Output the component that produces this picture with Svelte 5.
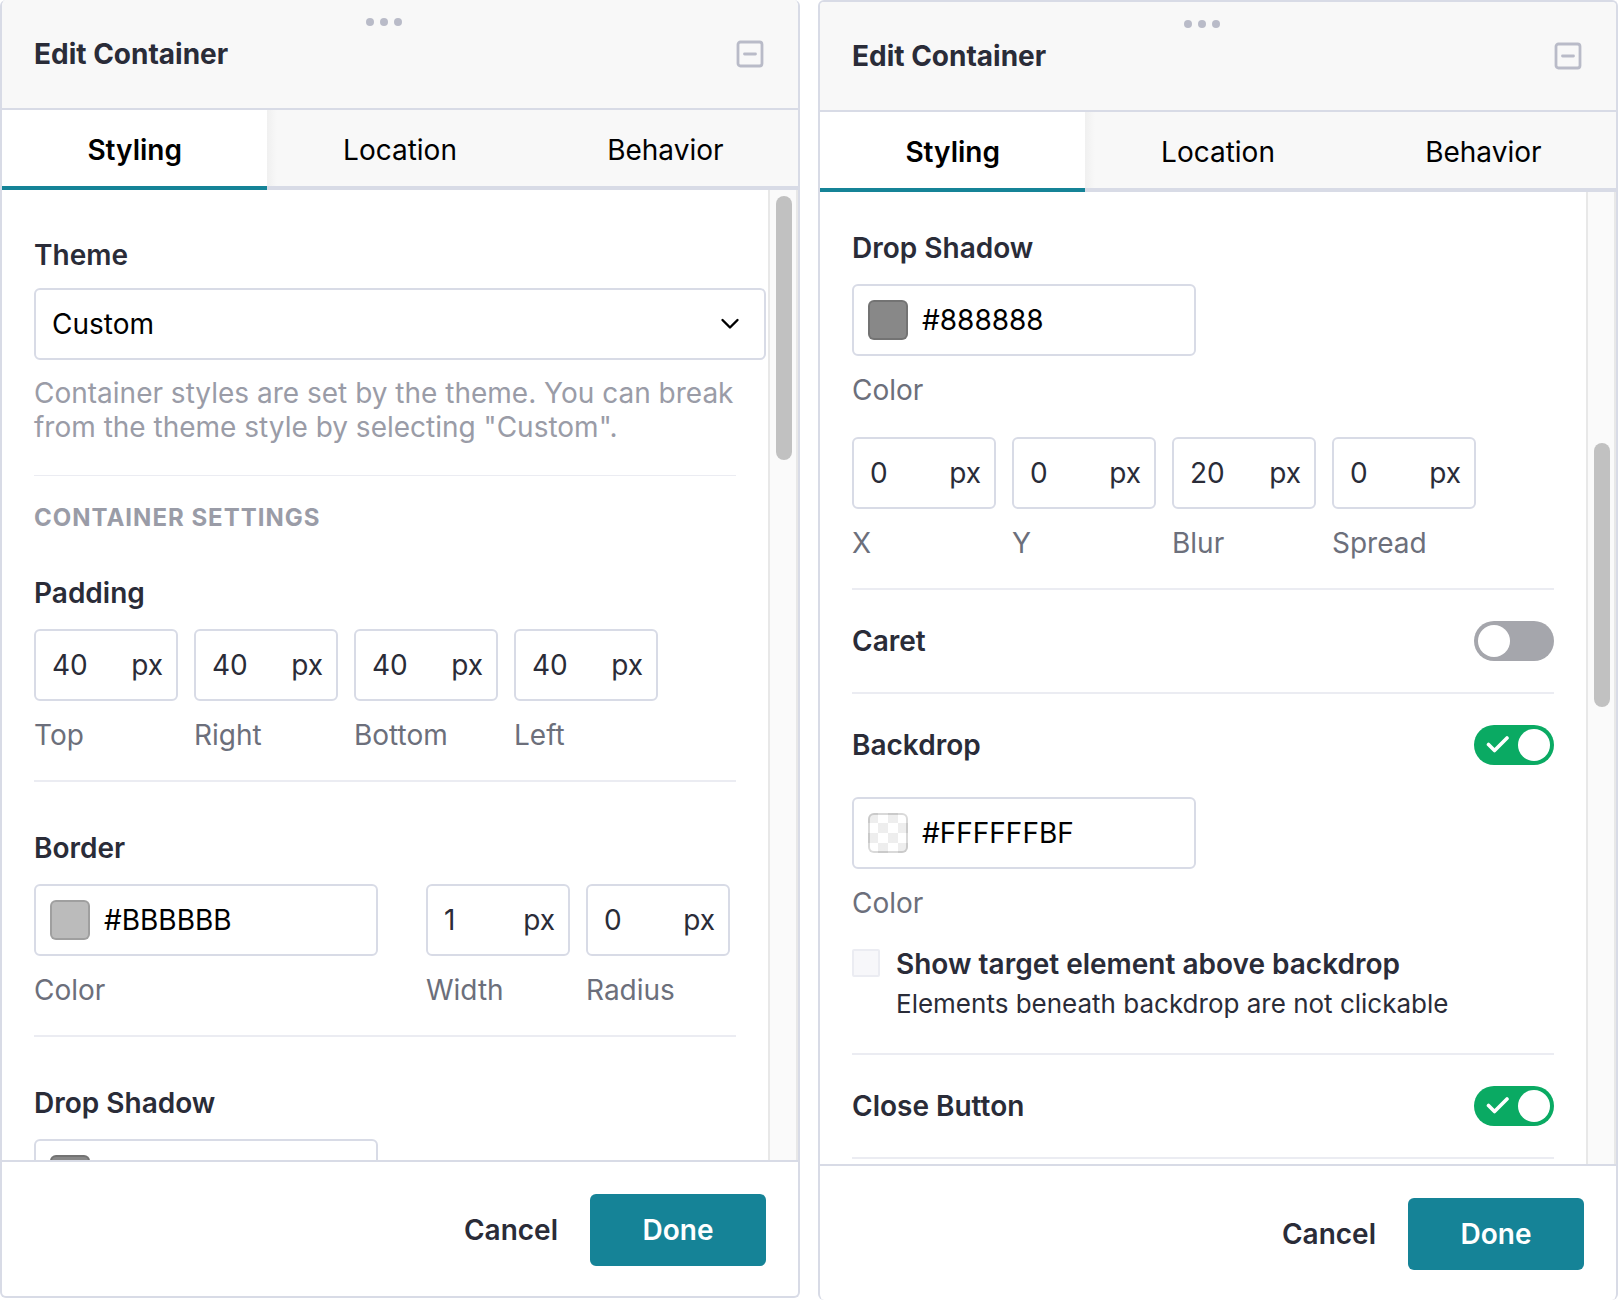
<script>
    const tabs = ['Styling', 'Location', 'Behavior'];

    // thumb: distance of the scrollbar thumb from the top of its track
    const panels = [
        { id: 'top', thumb: 6 },
        { id: 'scrolled', thumb: 251 },
    ];

    const padding = [
        { label: 'Top', value: 40 },
        { label: 'Right', value: 40 },
        { label: 'Bottom', value: 40 },
        { label: 'Left', value: 40 },
    ];
    const border = [
        { label: 'Width', value: 1 },
        { label: 'Radius', value: 0 },
    ];
    const shadow = [
        { label: 'X', value: 0 },
        { label: 'Y', value: 0 },
        { label: 'Blur', value: 20 },
        { label: 'Spread', value: 0 },
    ];
</script>

{#snippet pxField(id, field)}
    <div class="field">
        <div class="box px-box">
            <input id="{id}-{field.label}" type="text" inputmode="numeric" value={field.value} />
            <span>px</span>
        </div>
        <label for="{id}-{field.label}">{field.label}</label>
    </div>
{/snippet}

{#snippet colorField(id, color)}
    <div class="field">
        <div class="box color-box">
            <button class="swatch" aria-label="Pick color" style="--color: {color}"></button>
            <input id="{id}-color" type="text" value={color} />
        </div>
        <label for="{id}-color">Color</label>
    </div>
{/snippet}

{#snippet toggleRow(id, label, on)}
    <div class="toggle-row">
        <label class="group-label" for={id}>{label}</label>
        <span class="switch">
            <input {id} type="checkbox" role="switch" checked={on} />
            {#if on}
                <svg width="24" height="20" viewBox="0 0 24 20">
                    <path d="M2.5 10.5 L8.5 16.5 L21 4" />
                </svg>
            {/if}
        </span>
    </div>
{/snippet}

<main>
    {#each panels as panel}
        <section class="panel {panel.id}">
            <header>
                <div class="handle"><i></i><i></i><i></i></div>
                <h2>Edit Container</h2>
                <button class="collapse" aria-label="Collapse">
                    <svg width="28" height="28" viewBox="0 0 28 28">
                        <rect x="2" y="2" width="24" height="24" rx="2.5" />
                        <path d="M8.5 14 H19.5" />
                    </svg>
                </button>
            </header>

            <nav>
                {#each tabs as tab, i}
                    <button class="tab" class:active={i === 0}>{tab}</button>
                {/each}
            </nav>

            <div class="body">
                <div class="content">
                    {#if panel.id === 'top'}
                        <div class="theme">
                            <label class="group-label" for="theme">Theme</label>
                            <div class="select">
                                <select id="theme" class="box">
                                    <option>Custom</option>
                                </select>
                                <svg width="20" height="14" viewBox="0 0 20 14">
                                    <path d="M2.5 3 L10 10.5 L17.5 3" />
                                </svg>
                            </div>
                            <p>Container styles are set by the theme. You can break from the theme style by selecting "Custom".</p>
                        </div>

                        <h3>Container Settings</h3>

                        <div class="group first">
                            <div class="group-label">Padding</div>
                            <div class="row">
                                {#each padding as field}
                                    {@render pxField('padding', field)}
                                {/each}
                            </div>
                        </div>

                        <div class="group">
                            <div class="group-label">Border</div>
                            <div class="row">
                                <div class="border-color">
                                    {@render colorField('border', '#BBBBBB')}
                                </div>
                                {#each border as field}
                                    {@render pxField('border', field)}
                                {/each}
                            </div>
                        </div>

                        <div class="group">
                            <div class="group-label">Drop Shadow</div>
                            {@render colorField('shadow', '#888888')}
                        </div>
                    {:else}
                        <div class="group">
                            <div class="group-label">Drop Shadow</div>
                            {@render colorField('drop-shadow', '#888888')}
                            <div class="row offsets">
                                {#each shadow as field}
                                    {@render pxField('drop-shadow', field)}
                                {/each}
                            </div>
                        </div>

                        <div class="toggle-group">
                            {@render toggleRow('caret', 'Caret', false)}
                        </div>

                        <div class="toggle-group open">
                            {@render toggleRow('backdrop', 'Backdrop', true)}
                            <div class="backdrop">
                                {@render colorField('backdrop', '#FFFFFFBF')}
                                <label class="check">
                                    <input type="checkbox" />
                                    <span>
                                        <b>Show target element above backdrop</b>
                                        <small>Elements beneath backdrop are not clickable</small>
                                    </span>
                                </label>
                            </div>
                        </div>

                        <div class="toggle-group">
                            {@render toggleRow('close', 'Close Button', true)}
                        </div>
                    {/if}
                </div>
                <div class="track">
                    <div class="thumb" style="margin-top: {panel.thumb}px"></div>
                </div>
            </div>

            <footer>
                <button class="cancel">Cancel</button>
                <button class="done">Done</button>
            </footer>
        </section>
    {/each}
</main>

<style>
    :global(body) {
        background: #fff;
    }
    main {
        display: flex;
        gap: 18px;
        height: 100vh;
        overflow: hidden;
        font-family: Inter, "Liberation Sans", sans-serif;
        font-size: 28px;
        line-height: 34px;
        color: #2a2c38;
    }
    main * {
        box-sizing: border-box;
    }
    button, input, select {
        font: inherit;
        color: inherit;
        margin: 0;
        padding: 0;
        border: 0;
        background: none;
    }
    button, select {
        cursor: pointer;
    }
    svg {
        display: block;
        fill: none;
        stroke-linecap: round;
        stroke-linejoin: round;
    }

    .panel {
        flex: 1;
        min-width: 0;
        display: flex;
        flex-direction: column;
        border: 2px solid #d8dbe6;
        border-radius: 6px;
        overflow: hidden;
    }
    .top {
        border-top: 0;
        margin-bottom: 2px;
    }
    .scrolled {
        border-bottom: 0;
    }

    header {
        position: relative;
        flex: none;
        display: flex;
        align-items: center;
        justify-content: space-between;
        height: 110px;
        padding: 0 34px 0 32px;
        background: #f8f8f8;
        border-bottom: 2px solid #d8dbe6;
    }
    h2 {
        margin: 0;
        font-size: 28px;
        font-weight: 700;
    }
    .handle {
        position: absolute;
        top: 18px;
        left: 0;
        right: 32px;
        display: flex;
        justify-content: center;
        gap: 6px;
    }
    .handle i {
        width: 8px;
        height: 8px;
        border-radius: 50%;
        background: #b9bbc8;
    }
    .collapse svg {
        stroke: #b9bbc8;
        stroke-width: 2.8;
    }

    nav {
        flex: none;
        display: flex;
        height: 80px;
        background: #f8f8f8;
    }
    .tab {
        flex: 1;
        padding-top: 4px;
        color: #000;
        border-bottom: 4px solid #d8dbe6;
    }
    .active {
        font-weight: 600;
        background: #fff;
        border-color: #158397;
    }
    .active + .tab {
        background: linear-gradient(90deg, #f0f0f0, #f8f8f8 10px);
    }

    .body {
        flex: 1;
        min-height: 0;
        display: flex;
        overflow: hidden;
    }
    .content {
        flex: 1;
        min-width: 0;
        padding: 0 32px;
    }
    .track {
        flex: none;
        width: 30px;
        padding: 0 4px 0 6px;
        background: #fafafa;
        border: solid #e8e8e8;
        border-width: 0 2px;
    }
    .thumb {
        height: 264px;
        width: 16px;
        border-radius: 8px;
        background: #c1c1c1;
    }

    .group-label {
        display: block;
        font-weight: 600;
    }
    .box {
        display: flex;
        align-items: center;
        height: 72px;
        border: 2px solid #d8dbe6;
        border-radius: 6px;
        background: #fff;
    }

    .theme {
        padding: 48px 0 31px;
        border-bottom: 1px solid #ebecf2;
    }
    .select {
        position: relative;
        margin: 16px -30px 16px 0;
    }
    select {
        appearance: none;
        width: 100%;
        padding: 0 60px 0 16px;
        color: #000;
    }
    .select svg {
        position: absolute;
        right: 26px;
        top: 29px;
        stroke: #000;
        stroke-width: 2.4;
        pointer-events: none;
    }
    p {
        margin: 0;
        color: #9a9ca7;
    }
    h3 {
        margin: 25px 0 41px;
        font-size: 24px;
        font-weight: 700;
        letter-spacing: 1px;
        text-transform: uppercase;
        color: #9a9ca7;
    }

    .group {
        padding: 49px 0 28px;
        border-bottom: 2px solid #ebecf2;
    }
    .group .group-label {
        margin-bottom: 19px;
    }
    .first {
        padding-top: 0;
    }
    .scrolled .group {
        padding-top: 39px;
    }
    .row {
        display: flex;
        gap: 16px;
    }
    .offsets {
        margin-top: 30px;
    }
    .border-color {
        margin-right: 32px;
    }
    .field label {
        display: block;
        margin-top: 17px;
        color: #6c6f7b;
    }
    .px-box {
        width: 144px;
        padding: 0 13px 0 16px;
    }
    .box input {
        flex: 1;
        width: 0;
        min-width: 0;
    }
    .color-box {
        width: 344px;
        padding: 0 14px;
        gap: 14px;
        color: #000;
    }
    .swatch {
        flex: none;
        width: 40px;
        height: 40px;
        border: 2px solid rgba(0, 0, 0, 0.15);
        border-radius: 6px;
        background:
            linear-gradient(var(--color), var(--color)) border-box,
            conic-gradient(#fff 25%, #bbb 0 50%, #fff 0 75%, #bbb 0) 0 0 / 20px 20px border-box;
    }

    .toggle-group {
        padding: 31px 0;
        border-bottom: 2px solid #ebecf2;
    }
    .open {
        padding-bottom: 29px;
    }
    .toggle-row {
        display: flex;
        align-items: center;
        justify-content: space-between;
    }
    .switch {
        position: relative;
    }
    .switch input {
        appearance: none;
        display: block;
        width: 80px;
        height: 40px;
        padding: 4px;
        border-radius: 20px;
        background: #a5a6ac;
    }
    .switch input::before {
        content: '';
        display: block;
        width: 32px;
        height: 32px;
        border-radius: 50%;
        background: #fff;
    }
    .switch input:checked {
        padding-left: 44px;
        background: #0aaa63;
    }
    .switch svg {
        position: absolute;
        left: 12px;
        top: 9px;
        stroke: #fff;
        stroke-width: 3.6;
        pointer-events: none;
    }

    .backdrop {
        padding-top: 32px;
    }
    .check {
        display: flex;
        gap: 16px;
        margin-top: 24px;
    }
    .check input {
        appearance: none;
        flex: none;
        width: 28px;
        height: 28px;
        margin-top: 5px;
        border: 2px solid #ebecf2;
        border-radius: 2px;
        background: #f7f7fa;
    }
    b, small {
        display: block;
        line-height: 40px;
    }
    b {
        font-weight: 600;
    }
    small {
        font-size: 26px;
    }

    footer {
        flex: none;
        display: flex;
        justify-content: flex-end;
        gap: 32px;
        padding: 32px 32px 30px;
        border-top: 2px solid #d8dbe6;
    }
    footer button {
        height: 72px;
        font-weight: 600;
    }
    .done {
        width: 176px;
        border-radius: 6px;
        background: #158397;
        color: #fff;
    }
</style>
